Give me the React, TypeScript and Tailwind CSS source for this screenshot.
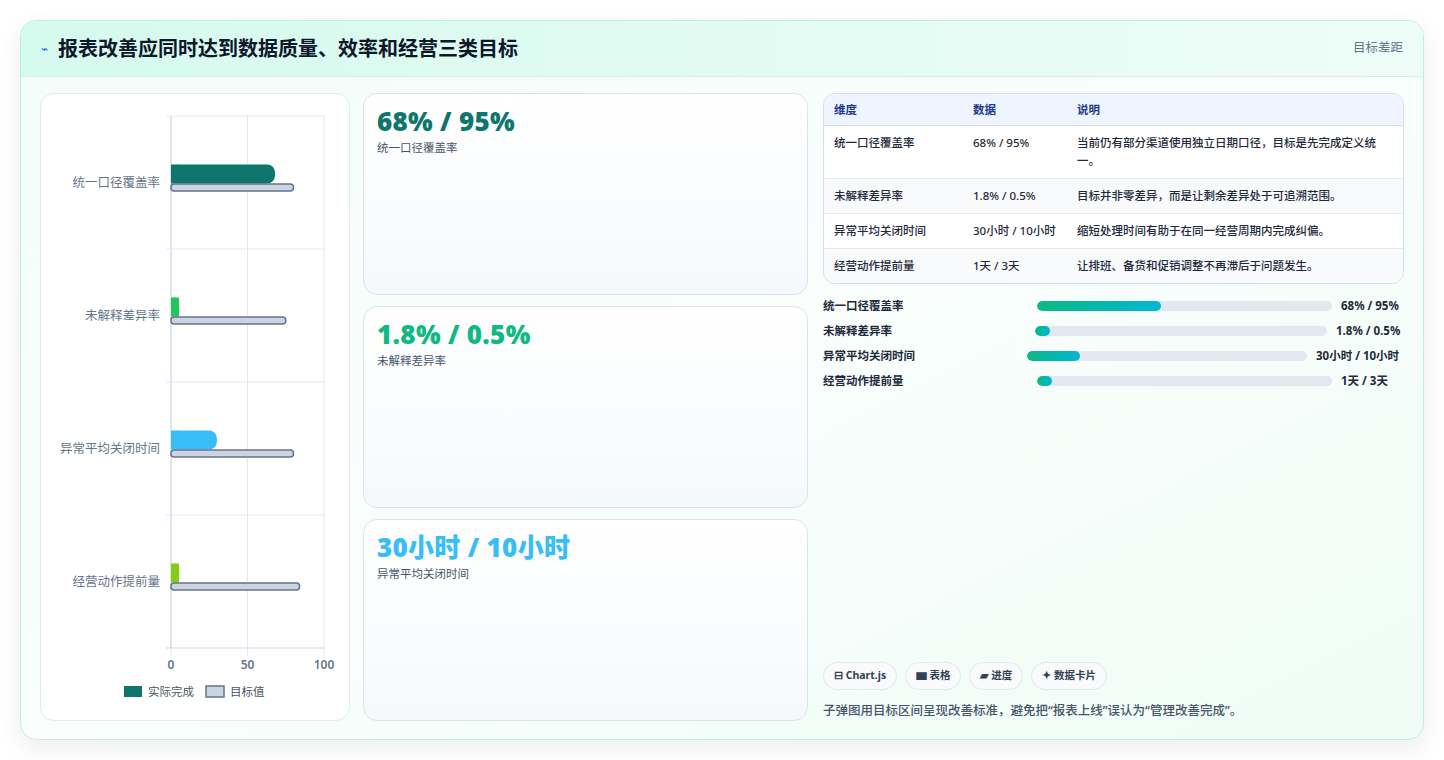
import React from "react";

const F = { fontFamily: '"Noto Sans","Noto Sans CJK SC",sans-serif' };

function Chart() {
  const x0 = 130, w = 153;
  const sx = (v: number) => x0 + (v / 100) * w;
  const rows = [
    { l: "统一口径覆盖率", a: 68, t: 80, c: "#0f766e" },
    { l: "未解释差异率", a: 5, t: 75, c: "#22c55e" },
    { l: "异常平均关闭时间", a: 30, t: 80, c: "#38bdf8" },
    { l: "经营动作提前量", a: 5, t: 84, c: "#84cc16" },
  ];
  const top = 22, rh = 133;
  return (
    <svg width="308" height="625" className="block">
      {[0, 50, 100].map((v) => (
        <line key={v} x1={sx(v)} x2={sx(v)} y1={top} y2={top + rh * 4 + 8} stroke="#e2e8f0" />
      ))}
      <line x1={x0} x2={x0} y1={top} y2={top + rh * 4} stroke="#cbd5e1" />
      {[0, 1, 2, 3, 4].map((i) => (
        <line key={i} x1={x0 - 5} x2={sx(100)} y1={top + rh * i} y2={top + rh * i} stroke={i === 4 ? "#cbd5e1" : "#e2e8f0"} />
      ))}
      {rows.map((r, i) => {
        const cy = top + rh * i + rh / 2;
        return (
          <g key={i}>
            <text x={x0 - 11} y={cy + 4} textAnchor="end" fontSize="12.5" fill="#64748b" style={F}>{r.l}</text>
            <rect x={x0} y={cy - 18} width={sx(r.a) - x0} height={19} rx="8" fill={r.c} />
            <rect x={x0} y={cy - 18} width={8} height={19} fill={r.c} />
            <rect x={x0} y={cy + 1.5} width={sx(r.t) - x0} height={7} rx="3" fill="#cbd5e1" stroke="#64748b" strokeWidth="1.5" />
          </g>
        );
      })}
      {[0, 50, 100].map((v) => (
        <text key={v} x={sx(v)} y={575} textAnchor="middle" fontSize="12" fontWeight="600" fill="#64748b" style={F}>{v}</text>
      ))}
      <rect x="83" y="592" width="18" height="11" fill="#0f766e" />
      <text x="107" y="602" fontSize="11.5" fill="#475569" style={F}>实际完成</text>
      <rect x="165" y="592" width="18" height="11" fill="#cbd5e1" stroke="#64748b" strokeWidth="1.5" />
      <text x="189" y="602" fontSize="11.5" fill="#475569" style={F}>目标值</text>
    </svg>
  );
}

const cards = [
  { v: "68% / 95%", l: "统一口径覆盖率", c: "text-[#0f766e]" },
  { v: "1.8% / 0.5%", l: "未解释差异率", c: "text-[#10b981]" },
  { v: "30小时 / 10小时", l: "异常平均关闭时间", c: "text-[#38bdf8]" },
];

const table = [
  ["统一口径覆盖率", "68% / 95%", "当前仍有部分渠道使用独立日期口径，目标是先完成定义统一。"],
  ["未解释差异率", "1.8% / 0.5%", "目标并非零差异，而是让剩余差异处于可追溯范围。"],
  ["异常平均关闭时间", "30小时 / 10小时", "缩短处理时间有助于在同一经营周期内完成纠偏。"],
  ["经营动作提前量", "1天 / 3天", "让排班、备货和促销调整不再滞后于问题发生。"],
];

const bars = [
  { l: "统一口径覆盖率", v: "68% / 95%", lw: "w-[214px]", tw: "w-[295px]", fw: "w-[42%]" },
  { l: "未解释差异率", v: "1.8% / 0.5%", lw: "w-[212px]", tw: "w-[292px]", fw: "w-[5%]" },
  { l: "异常平均关闭时间", v: "30小时 / 10小时", lw: "w-[204px]", tw: "w-[280px]", fw: "w-[19%]" },
  { l: "经营动作提前量", v: "1天 / 3天", lw: "w-[214px]", tw: "w-[295px]", fw: "w-[5%]" },
];

export default function App() {
  return (
    <div style={F} className="w-[1444px] h-[760px] bg-white pt-[20px] pl-[20px]">
      <div className="w-[1404px] h-[720px] rounded-[16px] border border-[#bfeee3] bg-gradient-to-br from-[#f3fdf9] via-[#f9fefc] to-[#effdf6] shadow-[0_8px_24px_rgba(15,23,42,0.08)] overflow-hidden flex flex-col">
        <div className="h-[56px] flex items-center justify-between px-[20px] bg-gradient-to-r from-[#d5faee] to-[#eefdf7] border-b border-[#d3efe8]">
          <div className="flex items-center gap-[10px]">
            <span className="text-[#2563eb] text-[12px]">⌁</span>
            <span className="text-[20px] font-bold text-[#0f172a]">报表改善应同时达到数据质量、效率和经营三类目标</span>
          </div>
          <span className="text-[12.5px] text-[#64748b]">目标差距</span>
        </div>
        <div className="flex gap-[13px] px-[19px] pt-[16px] pb-[18px] flex-1">
          <div className="w-[310px] rounded-[14px] border border-[#e2e8f0] bg-white">
            <Chart />
          </div>
          <div className="w-[448px] flex flex-col gap-[11px]">
            {cards.map((c) => (
              <div key={c.l} className="flex-1 rounded-[14px] border border-[#dbe4ee] bg-gradient-to-b from-white to-[#f6f9fc] px-[13px] pt-[9px]">
                <div className={`text-[26px] font-black leading-[36px] tracking-[0.3px] ${c.c}`}>{c.v}</div>
                <div className="text-[11.5px] text-[#475569]">{c.l}</div>
              </div>
            ))}
          </div>
          <div className="flex-1 flex flex-col pl-[2px]">
            <div className="w-[581px] rounded-[12px] border border-[#d4dee9] overflow-hidden text-[11.5px] text-[#1e293b]">
              <div className="flex bg-[#eef5fe] h-[32px] items-center font-bold text-[#1e3a8a] border-b border-[#d4dee9]">
                <div className="w-[149px] pl-[10px]">维度</div>
                <div className="w-[104px]">数据</div>
                <div className="flex-1">说明</div>
              </div>
              {table.map((r, i) => (
                <div key={i} className={`flex py-[8px] leading-[18px] ${i < 3 ? "border-b border-[#e2e8f0]" : ""} ${i % 2 ? "bg-[#f8fafc]" : "bg-white"}`}>
                  <div className="w-[149px] pl-[10px] font-medium">{r[0]}</div>
                  <div className="w-[104px] pr-[8px] font-medium">{r[1]}</div>
                  <div className="flex-1 pr-[8px] font-medium">{r[2]}</div>
                </div>
              ))}
            </div>
            <div className="mt-[12px] flex flex-col gap-[6px] text-[11.5px] font-semibold text-[#1e293b]">
              {bars.map((b) => (
                <div key={b.l} className="flex items-center h-[19px]">
                  <div className={b.lw}>{b.l}</div>
                  <div className={`${b.tw} h-[10px] rounded-full bg-[#e2e8f0] overflow-hidden`}>
                    <div className={`${b.fw} h-full rounded-full bg-gradient-to-r from-[#10b981] to-[#06b6d4] min-w-[15px]`} />
                  </div>
                  <div className="ml-[9px] font-bold">{b.v}</div>
                </div>
              ))}
            </div>
            <div className="mt-auto flex gap-[8px] text-[10.5px] font-bold text-[#334155]">
              {["⊟ Chart.js", "▆ 表格", "▰ 进度", "✦ 数据卡片"].map((t) => (
                <span key={t} className="rounded-full border border-[#e2e8f0] bg-[#f8fafc] px-[10px] h-[28px] flex items-center">{t}</span>
              ))}
            </div>
            <div className="mt-[12px] text-[12.5px] text-[#475569] font-medium">子弹图用目标区间呈现改善标准，避免把“报表上线”误认为“管理改善完成”。</div>
          </div>
        </div>
      </div>
    </div>
  );
}
